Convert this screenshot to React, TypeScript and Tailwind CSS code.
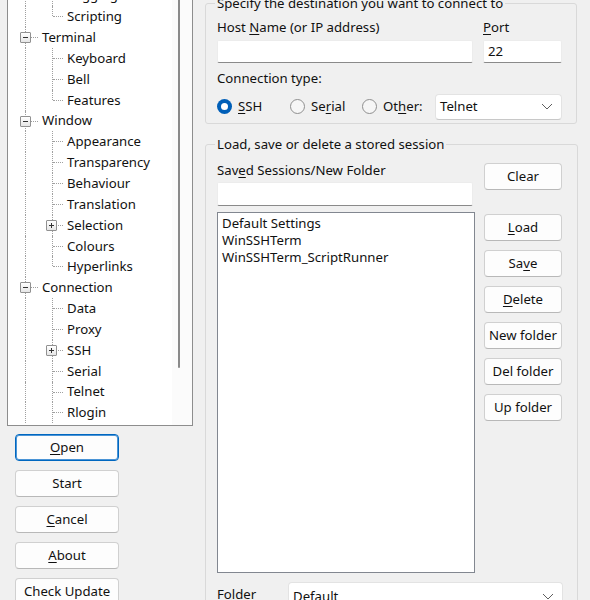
import React from "react";

type TreeItem = {
  label: string;
  level: 1 | 2;
  box?: "minus" | "plus";
  v2?: "full" | "top";
};

const TREE: TreeItem[] = [
  { label: "Logging", level: 2, v2: "full" },
  { label: "Scripting", level: 2, v2: "top" },
  { label: "Terminal", level: 1, box: "minus" },
  { label: "Keyboard", level: 2, v2: "full" },
  { label: "Bell", level: 2, v2: "full" },
  { label: "Features", level: 2, v2: "top" },
  { label: "Window", level: 1, box: "minus" },
  { label: "Appearance", level: 2, v2: "full" },
  { label: "Transparency", level: 2, v2: "full" },
  { label: "Behaviour", level: 2, v2: "full" },
  { label: "Translation", level: 2, v2: "full" },
  { label: "Selection", level: 2, v2: "full", box: "plus" },
  { label: "Colours", level: 2, v2: "full" },
  { label: "Hyperlinks", level: 2, v2: "top" },
  { label: "Connection", level: 1, box: "minus" },
  { label: "Data", level: 2, v2: "full" },
  { label: "Proxy", level: 2, v2: "full" },
  { label: "SSH", level: 2, v2: "full", box: "plus" },
  { label: "Serial", level: 2, v2: "full" },
  { label: "Telnet", level: 2, v2: "full" },
  { label: "Rlogin", level: 2, v2: "full" },
];

const FONT = "font-['Noto_Sans','Liberation_Sans',sans-serif]";

export default function App() {
  return (
    <div
      className={`w-[590px] h-[600px] overflow-hidden bg-[#f0f0f0] text-[13.2px] leading-[19px] text-[#111] flex items-start ${FONT}`}
    >
      {/* Left: category tree + main buttons */}
      <div className="-mt-[17px] ml-[7px] w-[186px] shrink-0">
        <div className="h-[443px] border border-[#8d8d8d] bg-white flex">
          <div className="flex-1 pt-[1.5px]">
            {TREE.map((item) => (
              <TreeRow key={item.label} item={item} />
            ))}
          </div>
          <div className="w-[20px] bg-[#fbfbfb]">
            <div className="ml-[6px] w-[2px] h-[384px] rounded-full bg-[#8a8a8a]" />
          </div>
        </div>

        <div className="mt-[8px] ml-[8px] flex flex-col gap-[9px]">
          <WinButton primary className="w-[104px]">
            <u className="underline-offset-2">O</u>pen
          </WinButton>
          <WinButton className="w-[104px]">Start</WinButton>
          <WinButton className="w-[104px]">
            <u className="underline-offset-2">C</u>ancel
          </WinButton>
          <WinButton className="w-[104px]">
            <u className="underline-offset-2">A</u>bout
          </WinButton>
          <WinButton className="w-[104px]">Check Update</WinButton>
        </div>
      </div>

      {/* Right: session panel */}
      <div className="-mt-[6px] ml-[12px] w-[372px] shrink-0">
        <fieldset className="border border-[#d9d9d9] rounded-[3px] pl-[11px] pr-[14px] pb-[3px]">
          <legend className="-ml-[2px] px-[2px]">Specify the destination you want to connect to</legend>
          <div className="mt-[5px] flex gap-[10px]">
            <div className="w-[256px]">
              <div>
                Host <u className="underline-offset-2">N</u>ame (or IP address)
              </div>
              <TextBox className="mt-[2.5px] h-[23px]" />
            </div>
            <div className="w-[79px]">
              <div>
                <u className="underline-offset-2">P</u>ort
              </div>
              <TextBox className="mt-[2.5px] h-[23px]" value="22" />
            </div>
          </div>
          <div className="mt-[6.5px]">Connection type:</div>
          <div className="mt-[5.5px] h-[26px] flex items-center">
            <Radio checked className="w-[73px]">
              <u className="underline-offset-2">S</u>SH
            </Radio>
            <Radio className="w-[72px]">
              Se<u className="underline-offset-2">r</u>ial
            </Radio>
            <Radio className="w-[73px]">
              Ot<u className="underline-offset-2">h</u>er:
            </Radio>
            <ComboBox className="w-[127px] h-[26px]" value="Telnet" />
          </div>
        </fieldset>

        <fieldset className="mt-[11px] border border-[#d9d9d9] rounded-[3px] pl-[11px] pr-[14px] h-[480px]">
          <legend className="-ml-[2px] px-[2px]">Load, save or delete a stored session</legend>
          <div className="mt-[7px] flex items-start gap-[9px]">
            <div className="w-[258px]">
              <div>
                Sav<u className="underline-offset-2">e</u>d Sessions/New Folder
              </div>
              <TextBox className="mt-[2.5px] h-[24px] w-[256px]" />
              <div className="mt-[6px] h-[361px] border border-[#828790] bg-white px-[4px] pt-[2px] leading-[17px]">
                <div>Default Settings</div>
                <div>WinSSHTerm</div>
                <div>WinSSHTerm_ScriptRunner</div>
              </div>
            </div>
            <div className="mt-[2px] w-[78px] flex flex-col">
              <WinButton>Clear</WinButton>
              <div className="mt-[24px] flex flex-col gap-[9px]">
                <WinButton>
                  <u className="underline-offset-2">L</u>oad
                </WinButton>
                <WinButton>
                  Sa<u className="underline-offset-2">v</u>e
                </WinButton>
                <WinButton>
                  <u className="underline-offset-2">D</u>elete
                </WinButton>
                <WinButton>New folder</WinButton>
                <WinButton>Del folder</WinButton>
                <WinButton>Up folder</WinButton>
              </div>
            </div>
          </div>
          <div className="mt-[9px] flex items-start">
            <div className="w-[71px] pt-[2.5px]">Folder</div>
            <ComboBox className="w-[275px] h-[28px]" value="Default" />
          </div>
        </fieldset>
      </div>
    </div>
  );
}

function TreeRow({ item }: { item: TreeItem }) {
  const dotted = "border-dotted border-[#a0a0a0]";
  return (
    <div className="relative h-[20.85px] flex items-center">
      {/* level 1 vertical line */}
      <span className={`absolute left-[17px] top-0 bottom-0 border-l ${dotted}`} />
      {item.level === 1 ? (
        <>
          <span className={`absolute left-[18px] top-[10px] w-[12px] border-t ${dotted}`} />
          {item.box && <ExpandBox kind={item.box} className="left-[12px]" />}
          <span className="ml-[34px] whitespace-nowrap">{item.label}</span>
        </>
      ) : (
        <>
          <span
            className={`absolute left-[44px] top-0 border-l ${dotted} ${
              item.v2 === "top" ? "h-[10px]" : "bottom-0"
            }`}
          />
          <span className={`absolute left-[45px] top-[10px] w-[10px] border-t ${dotted}`} />
          {item.box && <ExpandBox kind={item.box} className="left-[38px]" />}
          <span className="ml-[59px] whitespace-nowrap">{item.label}</span>
        </>
      )}
    </div>
  );
}

function ExpandBox({ kind, className = "" }: { kind: "minus" | "plus"; className?: string }) {
  return (
    <span
      className={`absolute top-[5px] w-[11px] h-[11px] border border-[#919191] rounded-[1px] bg-gradient-to-b from-white to-[#e6e6e6] flex items-center justify-center ${className}`}
    >
      <span className="relative w-[5px] h-[5px] flex items-center justify-center">
        <span className="absolute w-[5px] h-[1px] bg-[#333]" />
        {kind === "plus" && <span className="absolute w-[1px] h-[5px] bg-[#333]" />}
      </span>
    </span>
  );
}

function WinButton({
  children,
  primary,
  className = "",
}: {
  children: React.ReactNode;
  primary?: boolean;
  className?: string;
}) {
  return (
    <button
      className={`h-[27px] rounded-[4px] bg-[#fdfdfd] flex items-center justify-center whitespace-nowrap ${
        primary
          ? "border border-[#0067c0] shadow-[inset_0_0_0_1px_#4a94d6]"
          : "border border-[#d0d0d0] border-b-[#b8b8b8]"
      } ${className}`}
    >
      <span>{children}</span>
    </button>
  );
}

function TextBox({ className = "", value = "" }: { className?: string; value?: string }) {
  return (
    <div
      className={`bg-white border border-[#ececec] border-b-[#8a8a8a] rounded-[2px] px-[4px] flex items-center ${className}`}
    >
      {value}
    </div>
  );
}

function Radio({
  children,
  checked,
  className = "",
}: {
  children: React.ReactNode;
  checked?: boolean;
  className?: string;
}) {
  return (
    <div className={`flex items-center gap-[6px] ${className}`}>
      {checked ? (
        <span className="w-[15px] h-[15px] rounded-full bg-[#005fb8] flex items-center justify-center">
          <span className="w-[7px] h-[7px] rounded-full bg-white" />
        </span>
      ) : (
        <span className="w-[15px] h-[15px] rounded-full border border-[#8f8f8f] bg-[#f6f6f6]" />
      )}
      <span>{children}</span>
    </div>
  );
}

function ComboBox({ className = "", value }: { className?: string; value: string }) {
  return (
    <div
      className={`bg-white border border-[#e3e3e3] border-b-[#c8c8c8] rounded-[4px] pl-[4px] pr-[8px] flex items-center justify-between ${className}`}
    >
      <span>{value}</span>
      <svg width="12" height="7" viewBox="0 0 12 7" fill="none">
        <path d="M1 1l5 5 5-5" stroke="#5f5f5f" strokeWidth="1" />
      </svg>
    </div>
  );
}
